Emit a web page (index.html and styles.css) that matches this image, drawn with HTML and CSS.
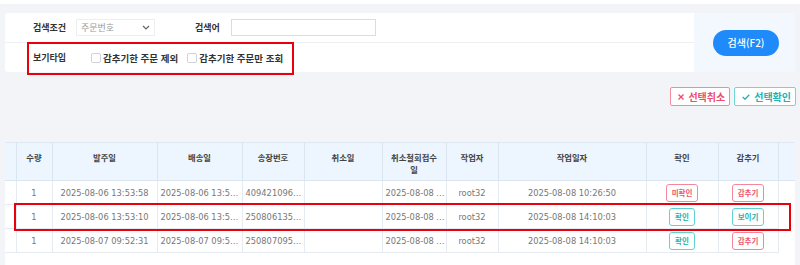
FILE: index.html
```html
<!DOCTYPE html>
<html lang="ko">
<head>
  <meta charset="UTF-8">
  <meta name="viewport" content="width=device-width, initial-scale=1.0">
  <title>주문 감추기 관리</title>
  <link rel="stylesheet" href="styles.css">
</head>
<body>
  <div class="top-strip"></div>

  <div class="search-panel">
    <div class="search-fields">
      <div class="search-row">
        <label class="field-label label-cond">검색조건</label>
        <div class="select-box">
          <span>주문번호</span>
          <svg width="8" height="5" viewBox="0 0 8 5"><path d="M1 1l3 3 3-3" fill="none" stroke="#666" stroke-width="1.2"/></svg>
        </div>
        <label class="field-label label-word" for="keyword">검색어</label>
        <input type="text" id="keyword" class="text-input">
      </div>
      <div class="search-row">
        <span class="field-label label-view">보기타입</span>
        <label class="check"><input type="checkbox">감추기한 주문 제외</label>
        <label class="check"><input type="checkbox">감추기한 주문만 조회</label>
      </div>
    </div>
    <div class="search-action">
      <button class="btn-search">검색(F2)</button>
    </div>
  </div>

  <div class="toolbar">
    <button class="btn-line btn-red">
      <svg width="6" height="6" viewBox="0 0 6 6"><path d="M0.5 0.5l5 5M5.5 0.5l-5 5" stroke="currentColor" stroke-width="1.3"/></svg>
      선택취소
    </button>
    <button class="btn-line btn-teal">
      <svg width="8" height="6" viewBox="0 0 8 6"><path d="M0.7 3l2.3 2.2 4.3-4.5" fill="none" stroke="currentColor" stroke-width="1.3"/></svg>
      선택확인
    </button>
  </div>

  <div class="grid">
    <table>
      <colgroup>
        <col style="width:11px"><col style="width:36px"><col style="width:105px"><col style="width:85px">
        <col style="width:62px"><col style="width:78px"><col style="width:64px"><col style="width:52px">
        <col style="width:148px"><col style="width:72px"><col style="width:60px"><col style="width:17px">
      </colgroup>
      <thead>
        <tr>
          <th></th>
          <th>수량</th>
          <th>발주일</th>
          <th>배송일</th>
          <th>송장번호</th>
          <th>취소일</th>
          <th>취소철회접수일</th>
          <th>작업자</th>
          <th>작업일자</th>
          <th>확인</th>
          <th>감추기</th>
          <th class="gutter"></th>
        </tr>
      </thead>
      <tbody>
        <tr>
          <td></td>
          <td>1</td>
          <td>2025-08-06 13:53:58</td>
          <td class="cut">2025-08-06 13:5…</td>
          <td class="cut">409421096…</td>
          <td></td>
          <td class="cut">2025-08-08 …</td>
          <td>root32</td>
          <td>2025-08-08 10:26:50</td>
          <td><span class="tag tag-red">미확인</span></td>
          <td><span class="tag tag-red">감추기</span></td>
          <td class="gutter"></td>
        </tr>
        <tr>
          <td></td>
          <td>1</td>
          <td>2025-08-06 13:53:10</td>
          <td class="cut">2025-08-06 13:5…</td>
          <td class="cut">250806135…</td>
          <td></td>
          <td class="cut">2025-08-08 …</td>
          <td>root32</td>
          <td>2025-08-08 14:10:03</td>
          <td><span class="tag tag-teal">확인</span></td>
          <td><span class="tag tag-teal">보이기</span></td>
          <td class="gutter"></td>
        </tr>
        <tr>
          <td></td>
          <td>1</td>
          <td>2025-08-07 09:52:31</td>
          <td class="cut">2025-08-07 09:5…</td>
          <td class="cut">250807095…</td>
          <td></td>
          <td class="cut">2025-08-08 …</td>
          <td>root32</td>
          <td>2025-08-08 14:10:03</td>
          <td><span class="tag tag-teal">확인</span></td>
          <td><span class="tag tag-red">감추기</span></td>
          <td class="gutter"></td>
        </tr>
      </tbody>
    </table>
  </div>

  <div class="mark mark-view"></div>
  <div class="mark mark-row"></div>
</body>
</html>
```

FILE: styles.css
```css
body {
  margin: 0;
  background-color: #f2f4f7;
  font-family: "Noto Sans CJK KR", "Noto Sans", sans-serif;
  color: #333;
  position: relative;
  height: 265px;
  overflow: hidden;
}
.top-strip {
  height: 4px;
  background-color: #fff;
}
.search-panel {
  display: flex;
  margin: 9px 5px 0;
  height: 59px;
  background-color: #fff;
  border-radius: 3px;
  overflow: hidden;
}
.search-fields {
  flex: 1;
}
.search-row {
  display: flex;
  align-items: center;
  height: 30px;
  padding-left: 28px;
  border-bottom: 1px solid #eef0f3;
  box-sizing: border-box;
}
.search-row + .search-row {
  height: 29px;
  border-bottom: none;
}
.field-label {
  font-size: 9px;
  font-weight: bold;
  color: #333;
}
.label-cond {
  width: 43px;
}
.label-word {
  width: 36px;
  margin-left: 40px;
}
.label-view {
  width: 58px;
}
.select-box {
  display: flex;
  align-items: center;
  justify-content: space-between;
  width: 79px;
  height: 17px;
  padding: 0 4px;
  box-sizing: border-box;
  border: 1px solid #eceef1;
  font-size: 9px;
  color: #999;
}
.text-input {
  width: 145px;
  height: 17px;
  margin: 0;
  padding: 0 4px;
  box-sizing: border-box;
  border: 1px solid #d8dde4;
  outline: none;
}
.check {
  display: flex;
  align-items: center;
  font-size: 9.5px;
  font-weight: bold;
  color: #333;
  margin-right: 9px;
}
.check input {
  appearance: none;
  width: 10px;
  height: 10px;
  margin: 0 2px 0 0;
  border: 1px solid #cfd3d9;
  border-radius: 2px;
  background-color: #fff;
}
.search-action {
  width: 101px;
  display: flex;
  align-items: center;
  padding-left: 19px;
  box-sizing: border-box;
  background-color: #f3f8fe;
}
.btn-search {
  width: 66px;
  height: 26px;
  padding: 0;
  border: none;
  border-radius: 13px;
  background-color: #1f8bfa;
  color: #fff;
  font-family: "Noto Sans CJK KR", sans-serif;
  font-size: 10px;
  font-weight: 500;
}
.toolbar {
  display: flex;
  justify-content: flex-end;
  align-items: flex-start;
  gap: 4px;
  height: 70px;
  padding: 15px 4px 0 0;
  box-sizing: border-box;
}
.btn-line {
  display: flex;
  align-items: center;
  gap: 4px;
  height: 19px;
  padding: 0 4px 0 7px;
  border: 1px solid;
  border-radius: 2px;
  background-color: #fff;
  font-family: "Noto Sans CJK KR", sans-serif;
  font-size: 10px;
  font-weight: bold;
}
.btn-red {
  border-color: #f28aa0;
  color: #ec4d6e;
}
.btn-teal {
  border-color: #71d6d6;
  color: #22b2b2;
}
.grid {
  margin: 0 5px;
  background-color: #fff;
  height: 123px;
}
.grid table {
  width: 790px;
  table-layout: fixed;
  border-collapse: collapse;
}
.grid th {
  height: 38px;
  padding: 8px 6px 0;
  box-sizing: border-box;
  vertical-align: top;
  background-color: #edf5fe;
  border: 1px solid #dbe5f0;
  border-top-color: #dfe8f3;
  font-size: 8.3px;
  line-height: 12px;
  font-weight: bold;
  color: #444;
}
.grid th:first-child {
  border-left: none;
}
.grid th.gutter {
  border-right: none;
}
.grid td {
  height: 23px;
  padding: 0 3px;
  border: 1px solid #e6ebf1;
  border-top: none;
  text-align: center;
  white-space: nowrap;
  overflow: hidden;
  text-overflow: ellipsis;
  font-family: "DejaVu Sans", "Noto Sans CJK KR", sans-serif;
  font-size: 8.3px;
  color: #777;
}
.grid td:first-child {
  border-left: none;
}
.grid td.cut {
  text-align: left;
  padding: 0 0 0 3px;
  text-overflow: clip;
}
.grid td.gutter {
  border: none;
}
.tag {
  display: inline-block;
  height: 16px;
  line-height: 16px;
  padding: 0 5px;
  border: 1px solid;
  border-radius: 3px;
  font-family: "Noto Sans CJK KR", sans-serif;
  font-size: 7.5px;
  font-weight: bold;
  vertical-align: middle;
}
.tag-red {
  border-color: #f3879c;
  color: #ef5673;
}
.tag-teal {
  border-color: #5fd3d1;
  color: #25b3b3;
}
.mark {
  position: absolute;
  border: 2px solid #e8000b;
  box-sizing: border-box;
}
.mark-view {
  left: 27px;
  top: 42px;
  width: 267px;
  height: 33px;
}
.mark-row {
  left: 14px;
  top: 203px;
  width: 777px;
  height: 28px;
}
```
